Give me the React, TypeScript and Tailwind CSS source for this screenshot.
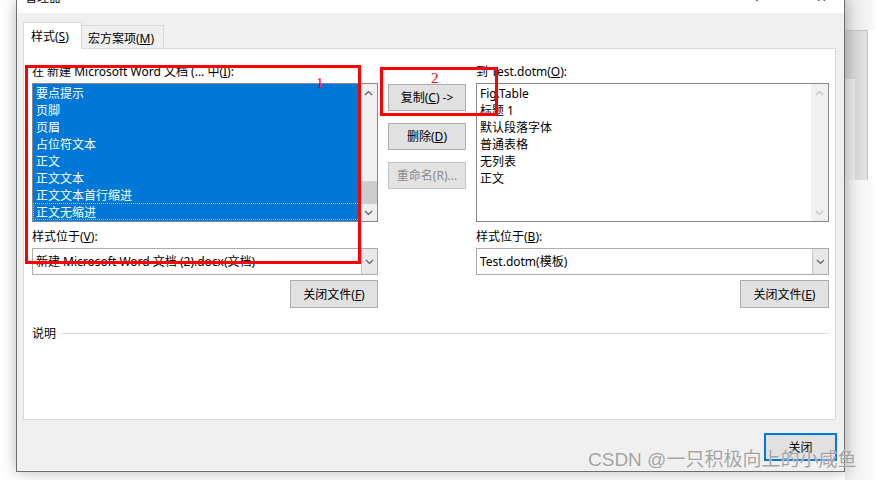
import React from "react";

const ChevUp = ({ cls }: { cls: string }) => (
  <svg width="9" height="6" viewBox="0 0 9 6" className={cls}>
    <path d="M1 5 L4.5 1.5 L8 5" fill="none" stroke="currentColor" strokeWidth="1.2" />
  </svg>
);
const ChevDown = ({ cls }: { cls: string }) => (
  <svg width="9" height="6" viewBox="0 0 9 6" className={cls}>
    <path d="M1 1 L4.5 4.5 L8 1" fill="none" stroke="currentColor" strokeWidth="1.2" />
  </svg>
);

function Btn({ children, w, disabled }: { children: React.ReactNode; w: string; disabled?: boolean }) {
  return (
    <div
      className={
        "h-[27px] flex items-center justify-center border pt-px " +
        w +
        (disabled ? " bg-[#e3e3e3] border-[#c4c4c4] text-[#8a8a8a]" : " bg-[#e1e1e1] border-[#adadad] text-black")
      }
    >
      {children}
    </div>
  );
}

function LeftList() {
  const items = ["要点提示", "页脚", "页眉", "占位符文本", "正文", "正文文本", "正文文本首行缩进", "正文无缩进"];
  return (
    <div className="mt-[4px] h-[139px] flex border border-[#828790] bg-white">
      <div className="flex-1 bg-[#0078d7] text-white">
        {items.map((t, i) => (
          <div
            key={t}
            className={
              "h-[17px] pt-[2px] leading-[15px] pl-[3px] whitespace-nowrap" +
              (i === items.length - 1 ? " outline-1 outline-dotted outline-[#e6b46a] -outline-offset-1" : "")
            }
          >
            {t}
          </div>
        ))}
      </div>
      <div className="w-[17px] flex flex-col bg-[#f0f0f0]">
        <div className="h-[17px] flex items-center justify-center">
          <ChevUp cls="text-[#606060]" />
        </div>
        <div className="flex-1" />
        <div className="h-[23px] bg-[#cdcdcd]" />
        <div className="h-[17px] flex items-center justify-center">
          <ChevDown cls="text-[#606060]" />
        </div>
      </div>
    </div>
  );
}

function RightList() {
  const items = ["Fig.Table", "标题 1", "默认段落字体", "普通表格", "无列表", "正文"];
  return (
    <div className="mt-[4px] h-[139px] flex border border-[#828790] bg-white">
      <div className="flex-1">
        {items.map((t) => (
          <div key={t} className="h-[17px] pt-[2px] leading-[15px] pl-[3px] whitespace-nowrap">
            {t}
          </div>
        ))}
      </div>
      <div className="w-[17px] flex flex-col bg-[#f0f0f0]">
        <div className="h-[17px] flex items-center justify-center">
          <ChevUp cls="text-[#c4c4c4]" />
        </div>
        <div className="flex-1" />
        <div className="h-[17px] flex items-center justify-center">
          <ChevDown cls="text-[#c4c4c4]" />
        </div>
      </div>
    </div>
  );
}

function Combo({ text }: { text: string }) {
  return (
    <div className="mt-[4px] h-[27px] flex border border-[#acacac] bg-white">
      <div className="flex-1 pl-[3px] pt-px flex items-center whitespace-nowrap overflow-hidden">{text}</div>
      <div className="w-[16px] bg-[#e8e8e8] border-l border-[#c8c8c8] flex items-center justify-center">
        <ChevDown cls="text-[#606060]" />
      </div>
    </div>
  );
}

export default function App() {
  return (
    <div className="relative w-[875px] h-[480px] overflow-hidden bg-white text-[12px] text-black font-['Noto_Sans','Noto_Sans_CJK_SC',sans-serif]">
      <div className="flex h-full">
        <div className="w-[16px] shrink-0" />
        <div className="relative z-10 shrink-0 flex flex-col w-[829px] h-[472px] border-l border-r border-b border-[#6e6e6e] bg-[#f0f0f0] shadow-[0_0_14px_rgba(0,0,0,0.28)]">
          {/* title bar */}
          <div className="h-[13px] bg-white overflow-hidden flex leading-[12px]">
            <div className="pl-[8px] -mt-[8px]">管理器</div>
            <div className="flex-1" />
            <div className="-mt-[9px] mr-[56px] text-[#222]">?</div>
            <div className="-mt-[9px] mr-[17px] text-[13px] text-[#222]">✕</div>
          </div>
          {/* tabs */}
          <div className="mt-[9px] pl-[6px] flex items-end h-[27px]">
            <div className="relative z-10 h-[27px] w-[59px] bg-white border-l border-r border-t border-[#d9d9d9] pl-[7px] pt-[6px] leading-[16px]">
              样式(<u>S</u>)
            </div>
            <div className="h-[24px] w-[82px] border-r border-t border-[#d9d9d9] bg-[#f0f0f0] pl-[6px] pt-[5px] leading-[16px]">
              宏方案项(<u>M</u>)
            </div>
          </div>
          {/* panel */}
          <div className="ml-[6px] -mt-px w-[813px] h-[372px] border border-[#d9d9d9] bg-white pl-[8px] pr-[6px] flex flex-col">
            <div className="flex gap-[10px]">
              {/* left column */}
              <div className="w-[346px] flex flex-col">
                <div className="mt-[15px] h-[15px] leading-[16px] whitespace-nowrap">
                  在 新建 Microsoft Word 文档 (... 中(<u>I</u>):
                </div>
                <LeftList />
                <div className="mt-[7px] h-[15px] leading-[16px]">
                  样式位于(<u>V</u>):
                </div>
                <Combo text="新建 Microsoft Word 文档 (2).docx(文档)" />
                <div className="mt-[5px] flex justify-end">
                  <div className="h-[28px] w-[88px] pt-px flex items-center justify-center bg-[#e1e1e1] border border-[#adadad]">
                    关闭文件(<u>F</u>)
                  </div>
                </div>
              </div>
              {/* middle column */}
              <div className="w-[78px] flex flex-col">
                <div className="mt-[35px]">
                  <Btn w="w-[78px]">
                    复制(<u>C</u>)&nbsp;-&gt;
                  </Btn>
                </div>
                <div className="mt-[12px]">
                  <Btn w="w-[78px]">
                    删除(<u>D</u>)
                  </Btn>
                </div>
                <div className="mt-[12px]">
                  <Btn w="w-[78px]" disabled>
                    重命名(R)...
                  </Btn>
                </div>
              </div>
              {/* right column */}
              <div className="w-[353px] flex flex-col">
                <div className="mt-[15px] h-[15px] leading-[16px] whitespace-nowrap">
                  到 Test.dotm(<u>O</u>):
                </div>
                <RightList />
                <div className="mt-[7px] h-[15px] leading-[16px]">
                  样式位于(<u>B</u>):
                </div>
                <Combo text="Test.dotm(模板)" />
                <div className="mt-[5px] flex justify-end">
                  <div className="h-[28px] w-[89px] pt-px flex items-center justify-center bg-[#e1e1e1] border border-[#adadad]">
                    关闭文件(<u>E</u>)
                  </div>
                </div>
              </div>
            </div>
            <div className="mt-[17px] h-[16px] flex items-center">
              <div className="leading-[16px] pt-[2px]">说明</div>
              <div className="ml-[5px] flex-1 h-px bg-[#dcdcdc]" />
            </div>
          </div>
          {/* bottom */}
          <div className="mt-[13px] flex justify-end pr-[7px]">
            <div className="h-[28px] w-[73px] pt-px flex items-center justify-center bg-[#e1e1e1] border-2 border-[#0078d7]">
              关闭
            </div>
          </div>
        </div>
        {/* right background window */}
        <div className="flex-1 flex flex-col">
          <div className="h-[30px] bg-gradient-to-r from-[#e4e4e4] to-[#fafafa]" />
          <div className="h-[150px] w-[23px] bg-gradient-to-r from-[#cfcfcf] to-[#e2e2e2] border-t border-r border-[#c6c6c6] flex">
            <div className="w-[10px] mt-[48px] h-[102px] bg-[#e9e9e9]" />
          </div>
          <div className="flex-1 bg-gradient-to-r from-[#ececec] to-[#fcfcfc]" />
        </div>
      </div>

      {/* annotation overlays */}
      <div className="absolute z-20 left-[25px] top-[65px] w-[336px] h-[199px] border-[3px] border-[#ff0000]" />
      <div className="absolute z-20 left-[316px] top-[76px] text-[15px] leading-[15px] text-[#ff0000] font-['Liberation_Serif',serif]">1</div>
      <div className="absolute z-20 left-[380px] top-[67px] w-[118px] h-[49px] border-[3px] border-[#ff0000]" />
      <div className="absolute z-20 left-[431px] top-[71px] text-[15px] leading-[15px] text-[#ff0000] font-['Liberation_Serif',serif]">2</div>

      {/* watermark */}
      <div className="absolute z-20 left-[588px] top-[449px] text-[19px] leading-[22px] whitespace-nowrap text-[#a3a3a3] font-['Liberation_Sans','Noto_Sans_CJK_SC',sans-serif] [text-shadow:0_0_1px_#ffffff]">
        CSDN @一只积极向上的小咸鱼
      </div>
    </div>
  );
}
